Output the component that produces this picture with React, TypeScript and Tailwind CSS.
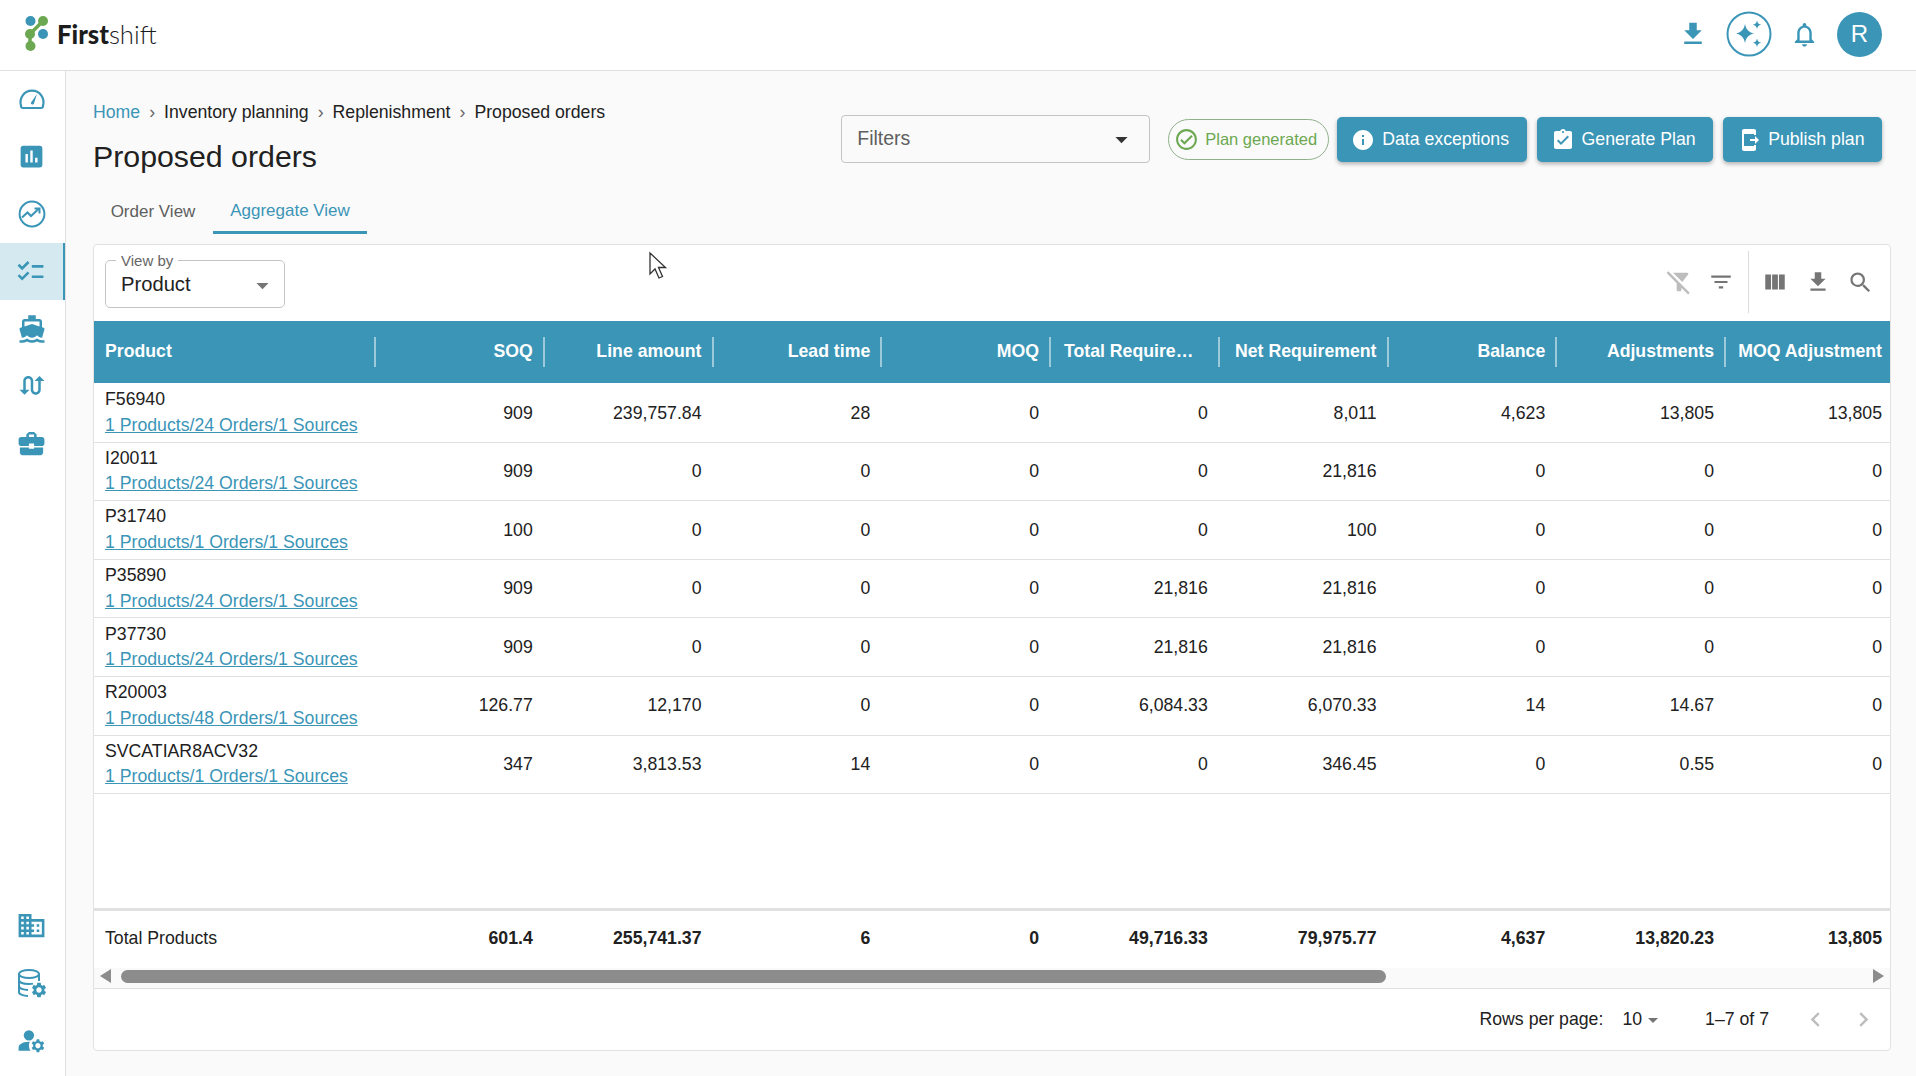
// App.tsx
import {
  MdFileDownload,
  MdOutlineNotifications,
  MdInfo,
  MdAssignmentTurnedIn,
  MdSendToMobile,
  MdOutlineCheckCircle,
  MdFilterList,
  MdViewColumn,
  MdSearch,
  MdFilterAltOff,
  MdChecklist,
  MdDirectionsBoat,
  MdSwapCalls,
  MdBusinessCenter,
  MdAssessment,
  MdDomain,
  MdManageAccounts,
  MdArrowDropDown,
  MdChevronLeft,
  MdChevronRight,
  MdSettings,
} from 'react-icons/md';

const gridCols = 'grid grid-cols-[282px_repeat(8,168.75px)_1fr]';

const columns = ['SOQ', 'Line amount', 'Lead time', 'MOQ', 'Total Requirement', 'Net Requirement', 'Balance', 'Adjustments', 'MOQ Adjustment'];

const rows = [
  { id: 'F56940', link: '1 Products/24 Orders/1 Sources', values: ['909', '239,757.84', '28', '0', '0', '8,011', '4,623', '13,805', '13,805'] },
  { id: 'I20011', link: '1 Products/24 Orders/1 Sources', values: ['909', '0', '0', '0', '0', '21,816', '0', '0', '0'] },
  { id: 'P31740', link: '1 Products/1 Orders/1 Sources', values: ['100', '0', '0', '0', '0', '100', '0', '0', '0'] },
  { id: 'P35890', link: '1 Products/24 Orders/1 Sources', values: ['909', '0', '0', '0', '21,816', '21,816', '0', '0', '0'] },
  { id: 'P37730', link: '1 Products/24 Orders/1 Sources', values: ['909', '0', '0', '0', '21,816', '21,816', '0', '0', '0'] },
  { id: 'R20003', link: '1 Products/48 Orders/1 Sources', values: ['126.77', '12,170', '0', '0', '6,084.33', '6,070.33', '14', '14.67', '0'] },
  { id: 'SVCATIAR8ACV32', link: '1 Products/1 Orders/1 Sources', values: ['347', '3,813.53', '14', '0', '0', '346.45', '0', '0.55', '0'] },
];

const totals = ['601.4', '255,741.37', '6', '0', '49,716.33', '79,975.77', '4,637', '13,820.23', '13,805'];

function GaugeIcon() {
  return (
    <svg width="28" height="28" viewBox="0 0 28 28" fill="none" stroke="currentColor" strokeWidth="2.2">
      <path d="M5 23h18a2 2 0 0 0 2-2.500A11.500 11.500 0 1 0 3 20.500 2 2 0 0 0 5 23Z" strokeLinejoin="round" />
      <path d="M13 17.500 19 9l-3 9.600a1.600 1.600 0 0 1-3-1.100Z" fill="currentColor" stroke="none" />
    </svg>
  );
}

function TrendIcon() {
  return (
    <svg width="28" height="28" viewBox="0 0 28 28" fill="none" stroke="currentColor" strokeWidth="2">
      <circle cx="14" cy="14" r="12.400" />
      <path d="M4 17.500 9.500 12.500 13 16 20.500 9" />
      <path d="M16.500 8.500h5v5" />
    </svg>
  );
}

function DatabaseGearIcon() {
  return (
    <svg width="30" height="30" viewBox="0 0 30 30" fill="none" stroke="currentColor" strokeWidth="2">
      <ellipse cx="12" cy="6" rx="10" ry="4" />
      <path d="M2 6v18c0 2.500 4.500 4 9 4M22 6v7M2 12c0 2.500 4.500 4 10 4 1.500 0 3-.1 4-.4M2 18c0 2.500 4.500 4 9 4" />
      <MdSettings x="13" y="13" size="18" fill="currentColor" stroke="none" />
    </svg>
  );
}

function SparkleIcon() {
  return (
    <svg width="46" height="46" viewBox="0 0 46 46" fill="none">
      <circle cx="23" cy="23" r="21.500" stroke="currentColor" strokeWidth="2" />
      <g fill="currentColor">
        <path d="M19 13c1.200 5.600 3.400 8 9 9.500-5.600 1.500-7.800 3.900-9 9.500-1.200-5.600-3.400-8-9-9.500 5.600-1.500 7.800-3.900 9-9.500Z" />
        <path d="M31 9.500c.6 2.700 1.600 3.700 4.300 4.300-2.700.6-3.700 1.600-4.300 4.300-.6-2.700-1.600-3.700-4.300-4.300 2.700-.6 3.700-1.600 4.300-4.300Z" />
        <path d="M31 27.500c.6 2.700 1.600 3.700 4.300 4.300-2.700.6-3.700 1.600-4.300 4.300-.6-2.700-1.600-3.700-4.300-4.300 2.700-.6 3.700-1.600 4.300-4.300Z" />
      </g>
    </svg>
  );
}

function Logo() {
  return (
    <div className="flex items-center gap-[7px]">
      <svg width="25" height="36" viewBox="0 0 25 36">
        <path d="M18 5 5 18 5 30" stroke="#6ca851" strokeWidth="3.500" fill="none" />
        <circle cx="5.500" cy="5" r="5" fill="#3a95b7" />
        <circle cx="18" cy="5" r="5" fill="#6ca851" />
        <circle cx="5" cy="18" r="5" fill="#6ca851" />
        <circle cx="18" cy="18" r="5" fill="#3a95b7" />
        <circle cx="5.500" cy="30" r="5" fill="#6ca851" />
      </svg>
      <span className="font-['Lato',sans-serif] text-[25.700px] leading-none text-[#1c1c1c] mt-[2px]">
        <span className="font-black">First</span>
        <span className="font-light">shift</span>
      </span>
    </div>
  );
}

function SideItem({ icon, active = false }: { icon: React.ReactNode; active?: boolean }) {
  return (
    <div className={`h-[57.500px] pr-[2px] flex items-center justify-center text-[#3a95b7] ${active ? 'bg-[#d5e9f0] border-r-2 border-[#3a95b7]' : ''}`}>
      {icon}
    </div>
  );
}

function PrimaryButton({ icon, label }: { icon: React.ReactNode; label: string }) {
  return (
    <button className="h-[45px] pl-[14px] pr-[17.500px] flex items-center gap-[7px] rounded-[5px] bg-[#3a95b7] text-white text-[17.700px] shadow-[0_2px_4px_rgba(0,0,0,0.3)]">
      {icon}
      {label}
    </button>
  );
}

export default function App() {
  return (
    <div className="w-screen h-screen overflow-hidden flex flex-col bg-[#fafafa] font-['Liberation_Sans',Arial,sans-serif] text-[#212121]">
      {/* top bar */}
      <header className="h-[71px] shrink-0 bg-white border-b border-[#dfdfdf] flex items-center justify-between pl-[25px] pr-[34px] pb-[2px]">
        <Logo />
        <div className="flex items-center text-[#3a95b7]">
          <MdFileDownload size={30} />
          <div className="ml-[18px]"><SparkleIcon /></div>
          <MdOutlineNotifications size={29} className="ml-[18px]" />
          <div className="ml-[18px] w-[45px] h-[45px] rounded-full bg-[#3a95b7] text-white flex items-center justify-center text-[24px]">R</div>
        </div>
      </header>

      <div className="flex-1 flex min-h-0">
        {/* sidebar */}
        <aside className="w-[66px] shrink-0 bg-white border-r border-[#dfdfdf] flex flex-col justify-between pb-[7px]">
          <div className="mt-[-1px]">
            <SideItem icon={<GaugeIcon />} />
            <SideItem icon={<MdAssessment size={29} />} />
            <SideItem icon={<TrendIcon />} />
            <SideItem active icon={<MdChecklist size={31} />} />
            <SideItem icon={<MdDirectionsBoat size={30} />} />
            <SideItem icon={<MdSwapCalls size={30} />} />
            <SideItem icon={<MdBusinessCenter size={31} />} />
          </div>
          <div>
            <SideItem icon={<MdDomain size={31} />} />
            <SideItem icon={<DatabaseGearIcon />} />
            <SideItem icon={<MdManageAccounts size={31} />} />
          </div>
        </aside>

        {/* main */}
        <main className="flex-1 min-w-0 flex flex-col pl-[27px] pr-[25px] pb-[25px] relative">
          <div className="flex justify-between">
            <div>
              <div className="pt-[31px] flex items-center text-[17.700px] leading-[20px]">
                <span className="text-[#3a95b7]">Home</span>
                <span className="mx-[9px] text-[#666]">›</span>
                <span>Inventory planning</span>
                <span className="mx-[9px] text-[#666]">›</span>
                <span>Replenishment</span>
                <span className="mx-[9px] text-[#666]">›</span>
                <span>Proposed orders</span>
              </div>
              <h1 className="mt-[17px] text-[30.300px] leading-[36px] font-normal">Proposed orders</h1>
            </div>
            <div className="flex items-start pt-[46px] pr-[9px]">
              <div className="w-[309px] h-[48px] mt-[-2px] mr-[18px] bg-[#fafafa] border border-[#c4c4c4] rounded-[4px] flex items-center justify-between pl-[15px] pr-[13px] text-[19.500px] text-[#5f5f5f]">
                Filters
                <MdArrowDropDown size={29} className="text-[#333]" />
              </div>
              <div className="h-[41px] w-[161px] mt-[2px] mr-[8px] rounded-full border border-[#8fb18a] flex items-center gap-[6px] pl-[5px] text-[#6ca851] text-[16.500px]">
                <MdOutlineCheckCircle size={25} />
                Plan generated
              </div>
              <div className="flex gap-[10px]">
                <PrimaryButton icon={<MdInfo size={24} />} label="Data exceptions" />
                <PrimaryButton icon={<MdAssignmentTurnedIn size={24} />} label="Generate Plan" />
                <PrimaryButton icon={<MdSendToMobile size={24} />} label="Publish plan" />
              </div>
            </div>
          </div>

          {/* tabs */}
          <div className="flex mt-[13px] h-[46px] text-[17px]">
            <div className="w-[120px] pt-[2px] flex items-center justify-center text-[#5f5f5f]">Order View</div>
            <div className="w-[154px] pt-[2px] flex items-center justify-center text-[#3a95b7] border-b-[3px] border-[#3a95b7]">Aggregate View</div>
          </div>

          {/* card */}
          <section className="mt-[10px] flex-1 min-h-0 bg-white border border-[#e2e2e2] rounded-[4px] flex flex-col overflow-hidden">
            <div className="h-[76px] shrink-0 flex items-center justify-between pl-[11px] pr-[16px]">
              <fieldset className="w-[180px] h-[54px] mt-[-5px] border border-[#c4c4c4] rounded-[5px] pl-[10px] pr-[7px] flex items-center justify-between">
                <legend className="text-[15px] leading-[14px] px-[5px] text-[#666]">View by</legend>
                <span className="text-[20.200px] leading-[24px] pl-[5px] mt-[-6px]">Product</span>
                <MdArrowDropDown size={29} className="text-[#757575] mt-[-3px]" />
              </fieldset>
              <div className="flex items-center h-[62px] mt-[-2px]">
                <MdFilterAltOff size={28} className="text-[#bdbdbd]" />
                <MdFilterList size={26} className="text-[#757575] ml-[15px]" />
                <div className="w-px h-[62px] bg-[#dcdcdc] ml-[14px] mr-[13px]" />
                <MdViewColumn size={26} className="text-[#757575]" />
                <MdFileDownload size={26} className="text-[#757575] ml-[17px]" />
                <MdSearch size={27} className="text-[#757575] ml-[16px]" />
              </div>
            </div>

            {/* table head */}
            <div className={`${gridCols} h-[62px] shrink-0 items-center bg-[#3a95b7] text-white text-[17.700px] font-bold`}>
              <div className="h-[30px] pl-[11px] pb-[2px] flex items-center border-r-2 border-white/50">Product</div>
              {columns.map((c, i) =>
                c === 'Total Requirement' ? (
                  <div key={c} className="h-[30px] pl-[13px] pr-[20px] leading-[28px] truncate border-r-2 border-white/50">{c}</div>
                ) : (
                  <div key={c} className={`h-[30px] pb-[2px] flex items-center justify-end whitespace-nowrap ${i < columns.length - 1 ? 'pr-[10px] border-r-2 border-white/50' : 'pr-[8px]'}`}>{c}</div>
                ),
              )}
            </div>

            {/* table body */}
            <div className="flex-1 min-h-0 pt-px text-[17.700px]">
              {rows.map((r) => (
                <div key={r.id} className={`${gridCols} h-[58.600px] items-center border-b border-[#e0e0e0]`}>
                  <div className="pl-[11px] leading-[25.500px]">
                    <div>{r.id}</div>
                    <div className="text-[#3a95b7] underline">{r.link}</div>
                  </div>
                  {r.values.map((v, i) => (
                    <div key={i} className={`text-right ${i === 8 ? 'pr-[8px]' : 'pr-[12px]'}`}>{v}</div>
                  ))}
                </div>
              ))}
            </div>

            {/* totals */}
            <div className={`${gridCols} h-[60px] shrink-0 items-center border-t-[3px] border-[#e0e0e0] text-[17.700px] pb-[3px]`}>
              <div className="pl-[11px]">Total Products</div>
              {totals.map((v, i) => (
                <div key={i} className={`text-right font-bold ${i === 8 ? 'pr-[8px]' : 'pr-[12px]'}`}>{v}</div>
              ))}
            </div>

            {/* scroll bar */}
            <div className="h-[21px] shrink-0 bg-[#fafafa] border-b border-[#e0e0e0] flex items-center pl-[6px] pr-[6px] pb-[4px]">
              <div className="w-0 h-0 border-y-[7px] border-y-transparent border-r-[11px] border-r-[#8c8c8c]" />
              <div className="ml-[10px] w-[1265px] h-[13px] rounded-full bg-[#8c8c8c]" />
              <div className="ml-auto w-0 h-0 border-y-[7px] border-y-transparent border-l-[11px] border-l-[#8c8c8c]" />
            </div>

            {/* pagination */}
            <div className="h-[61px] shrink-0 flex items-center justify-end pr-[12px] text-[17.700px]">
              <span>Rows per page:</span>
              <span className="ml-[19px]">10</span>
              <MdArrowDropDown size={24} className="text-[#757575] ml-[-1px]" />
              <span className="ml-[40px]">1–7 of 7</span>
              <MdChevronLeft size={29} className="text-[#bdbdbd] ml-[32px]" />
              <MdChevronRight size={29} className="text-[#bdbdbd] ml-[19px]" />
            </div>
          </section>

          {/* mouse pointer */}
          <svg className="absolute left-[582px] top-[180px]" width="20" height="30" viewBox="0 0 20 30">
            <path d="M2 2v21l5-5 4 9 3.500-1.500-4-9h7Z" fill="#fff" stroke="#333" strokeWidth="1.300" />
          </svg>
        </main>
      </div>
    </div>
  );
}
